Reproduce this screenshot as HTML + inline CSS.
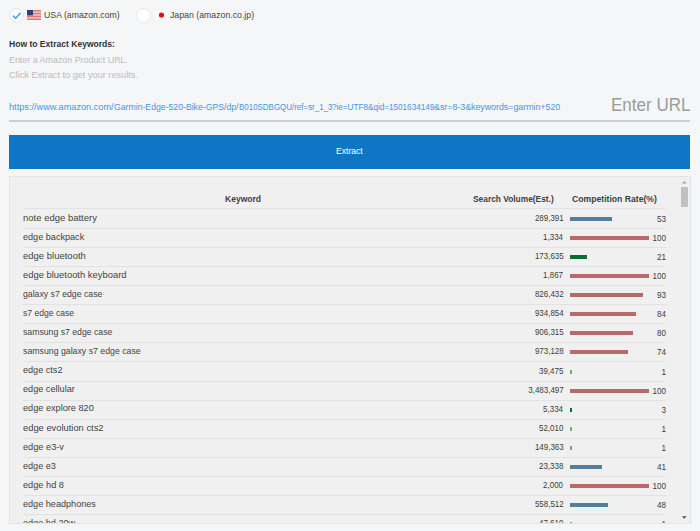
<!DOCTYPE html>
<html><head><meta charset="utf-8">
<style>
*{box-sizing:border-box;margin:0;padding:0}
html,body{width:700px;height:531px;overflow:hidden;background:#f5f6f8;font-family:"Liberation Sans",sans-serif;color:#333}
.abs{position:absolute}
.url{top:102.6px;font-size:9.2px;color:#4595e6;transform-origin:0 0}
.radio{position:absolute;width:15px;height:15px;border-radius:50%;background:#fff;border:1px solid #e6e6e6}
.t{position:absolute;white-space:nowrap;line-height:1}
.panel{position:absolute;left:9px;top:176px;width:682px;height:348px;background:#f0f0f0;border:1px solid #e4e4e4;overflow:hidden}
.row{position:absolute;left:13px;width:643px;height:19px;border-bottom:1px solid #e2e2e2}
.kw{position:absolute;left:0;top:2.8px;font-size:9.5px;color:#444;white-space:nowrap;transform:scaleX(.89);transform-origin:0 0;line-height:1}
.vol{position:absolute;right:102.5px;top:3px;font-size:9.6px;color:#3d3d3d;white-space:nowrap;transform:scaleX(.83);transform-origin:100% 0;line-height:1}
.bar{position:absolute;left:547px;top:7px;height:4px;}
.rate{position:absolute;right:0;top:5px;font-size:9px;color:#3d3d3d;white-space:nowrap;transform:scaleX(.9);transform-origin:100% 0;line-height:1}
.b{background:#50809a}.r{background:#b86a6b}.g{background:#0b6e35}
</style></head><body>
<!-- radios -->
<div class="radio" style="left:9px;top:7.5px">
<svg width="15" height="15" viewBox="0 0 15 15" style="position:absolute;left:-1px;top:-1px"><path d="M4.4 8.1 L6.8 10.3 L11.2 5.2" fill="none" stroke="#4496ee" stroke-width="1.5" stroke-linecap="round" stroke-linejoin="round"/></svg>
</div>
<svg class="abs" style="left:27px;top:10px" width="14" height="10" viewBox="0 0 14 10"><rect width="14" height="10" fill="#f6eeee"/><rect y="0.000" width="14" height="0.769" fill="#d9534f"/><rect y="1.538" width="14" height="0.769" fill="#d9534f"/><rect y="3.077" width="14" height="0.769" fill="#d9534f"/><rect y="4.615" width="14" height="0.769" fill="#d9534f"/><rect y="6.154" width="14" height="0.769" fill="#d9534f"/><rect y="7.692" width="14" height="0.769" fill="#d9534f"/><rect y="9.231" width="14" height="0.769" fill="#d9534f"/><rect width="6" height="5.4" fill="#2b3f78"/></svg>
<div class="t" style="left:44px;top:10px;font-size:9.5px;color:#444;transform:scaleX(.92);transform-origin:0 0">USA (amazon.com)</div>
<div class="radio" style="left:136px;top:7.5px"></div>
<svg class="abs" style="left:155px;top:10px" width="13" height="10" viewBox="0 0 13 10">
<rect width="13" height="10" fill="#fafafa"/><circle cx="6.5" cy="5" r="2.6" fill="#e00f1a"/>
</svg>
<div class="t" style="left:170px;top:10px;font-size:9.5px;color:#444;transform:scaleX(.92);transform-origin:0 0">Japan (amazon.co.jp)</div>

<div class="t" style="left:9px;top:39px;font-size:9.5px;font-weight:bold;color:#333;transform:scaleX(.9);transform-origin:0 0">How to Extract Keywords:</div>
<div class="t" style="left:9px;top:55px;font-size:9.5px;color:#bcbcbc;transform:scaleX(.935);transform-origin:0 0">Enter a Amazon Product URL.</div>
<div class="t" style="left:9px;top:70px;font-size:9.5px;color:#bcbcbc;transform:scaleX(.965);transform-origin:0 0">Click Extract to get your results.</div>

<div class="t url" style="left:9px;transform:scaleX(1.0)">https://www.amazon.com/</div><div class="t url" style="left:114px;transform:scaleX(0.945)">Garmin-Edge-520-Bike-GPS/dp/</div><div class="t url" style="left:238.6px;transform:scaleX(0.865)">B010SDBGQU/ref=sr_1_3</div><div class="t url" style="left:332px;transform:scaleX(0.886)">?ie=UTF8&amp;qid=1501634149</div><div class="t url" style="left:434.3px;transform:scaleX(0.96)">&amp;sr=8-3&amp;keywords=garmin+520</div>
<div class="t" style="left:610.5px;top:96px;font-size:18px;color:#9b9b9b;transform:scaleX(.945);transform-origin:0 0">Enter URL</div>
<div class="abs" style="left:9px;top:120px;width:681px;height:2px;background:#cdcdcd"></div>

<div class="abs" style="left:9px;top:135px;width:681px;height:34px;background:#0e76c5"></div>
<div class="t" style="left:336px;top:147px;font-size:8.6px;color:#fff">Extract</div>

<div class="panel">
 <div class="t" style="left:214.6px;top:17.6px;font-size:9.2px;font-weight:bold;color:#3f3f3f;transform:scaleX(.93);transform-origin:0 0">Keyword</div>
 <div class="t" style="left:462.6px;top:17.6px;font-size:9.2px;font-weight:bold;color:#3f3f3f;transform:scaleX(.91);transform-origin:0 0">Search Volume(Est.)</div>
 <div class="t" style="left:562.3px;top:17.6px;font-size:9.2px;font-weight:bold;color:#3f3f3f;transform:scaleX(.94);transform-origin:0 0">Competition Rate(%)</div>
 <div class="abs" style="left:13px;top:31px;width:643px;height:1px;background:#e2e2e2"></div>
 <!--ROWS--><div class="row" style="top:33.0px"><div class="kw" style="transform:scaleX(1.0)">note edge battery</div><div class="vol">289,391</div><div class="trk"></div><div class="bar b" style="width:41.66px"></div><div class="rate">53</div></div>
<div class="row" style="top:52.07px"><div class="kw" style="transform:scaleX(0.9579)">edge backpack</div><div class="vol">1,334</div><div class="trk"></div><div class="bar r" style="width:78.6px"></div><div class="rate">100</div></div>
<div class="row" style="top:71.14px"><div class="kw" style="transform:scaleX(1.0)">edge bluetooth</div><div class="vol">173,635</div><div class="trk"></div><div class="bar g" style="width:16.51px"></div><div class="rate">21</div></div>
<div class="row" style="top:90.21px"><div class="kw" style="transform:scaleX(0.9895)">edge bluetooth keyboard</div><div class="vol">1,867</div><div class="trk"></div><div class="bar r" style="width:78.6px"></div><div class="rate">100</div></div>
<div class="row" style="top:109.28px"><div class="kw" style="transform:scaleX(0.9158)">galaxy s7 edge case</div><div class="vol">826,432</div><div class="trk"></div><div class="bar r" style="width:73.1px"></div><div class="rate">93</div></div>
<div class="row" style="top:128.35px"><div class="kw" style="transform:scaleX(0.9021)">s7 edge case</div><div class="vol">934,854</div><div class="trk"></div><div class="bar r" style="width:66.02px"></div><div class="rate">84</div></div>
<div class="row" style="top:147.42px"><div class="kw" style="transform:scaleX(0.9147)">samsung s7 edge case</div><div class="vol">906,315</div><div class="trk"></div><div class="bar r" style="width:62.88px"></div><div class="rate">80</div></div>
<div class="row" style="top:166.49px"><div class="kw" style="transform:scaleX(0.9211)">samsung galaxy s7 edge case</div><div class="vol">973,128</div><div class="trk"></div><div class="bar r" style="width:58.16px"></div><div class="rate">74</div></div>
<div class="row" style="top:185.56px"><div class="kw" style="transform:scaleX(0.9579)">edge cts2</div><div class="vol">39,475</div><div class="trk"></div><div class="bar g" style="width:1.5px;opacity:.55"></div><div class="rate">1</div></div>
<div class="row" style="top:204.63px"><div class="kw" style="transform:scaleX(0.9621)">edge cellular</div><div class="vol">3,483,497</div><div class="trk"></div><div class="bar r" style="width:78.6px"></div><div class="rate">100</div></div>
<div class="row" style="top:223.7px"><div class="kw" style="transform:scaleX(0.9632)">edge explore 820</div><div class="vol">5,334</div><div class="trk"></div><div class="bar g" style="width:2.36px"></div><div class="rate">3</div></div>
<div class="row" style="top:242.77px"><div class="kw" style="transform:scaleX(0.9842)">edge evolution cts2</div><div class="vol">52,010</div><div class="trk"></div><div class="bar g" style="width:1.5px;opacity:.55"></div><div class="rate">1</div></div>
<div class="row" style="top:261.84px"><div class="kw" style="transform:scaleX(0.9684)">edge e3-v</div><div class="vol">149,363</div><div class="trk"></div><div class="bar g" style="width:1.5px;opacity:.55"></div><div class="rate">1</div></div>
<div class="row" style="top:280.91px"><div class="kw" style="transform:scaleX(0.9579)">edge e3</div><div class="vol">23,338</div><div class="trk"></div><div class="bar b" style="width:32.23px"></div><div class="rate">41</div></div>
<div class="row" style="top:299.98px"><div class="kw" style="transform:scaleX(0.9684)">edge hd 8</div><div class="vol">2,000</div><div class="trk"></div><div class="bar r" style="width:78.6px"></div><div class="rate">100</div></div>
<div class="row" style="top:319.05px"><div class="kw" style="transform:scaleX(0.9579)">edge headphones</div><div class="vol">558,512</div><div class="trk"></div><div class="bar b" style="width:37.73px"></div><div class="rate">48</div></div>
<div class="row" style="top:338.12px"><div class="kw" style="transform:scaleX(0.9579)">edge hd 20w</div><div class="vol">47,610</div><div class="trk"></div><div class="bar g" style="width:1.5px;opacity:.55"></div><div class="rate">1</div></div>
<div class="row" style="top:357.19px"><div class="kw" style="transform:scaleX(0.9579)">edge hd 10</div><div class="vol">12,345</div><div class="trk"></div><div class="bar g" style="width:1.5px;opacity:.55"></div><div class="rate">1</div></div><!--/ROWS-->
 <!-- scrollbar -->
 <svg class="abs" style="left:670.4px;top:3px" width="9" height="6" viewBox="0 0 9 6"><path d="M1.9 3.6 L4.3 1 L6.7 3.6Z" fill="#a3a3a3"/></svg>
 <div class="abs" style="left:671px;top:10px;width:7px;height:20px;background:#c1c1c1"></div>
 <svg class="abs" style="left:670.4px;top:338px" width="9" height="6" viewBox="0 0 9 6"><path d="M1.9 1.2 L4.3 3.8 L6.7 1.2Z" fill="#505050"/></svg>
</div>
</body></html>
